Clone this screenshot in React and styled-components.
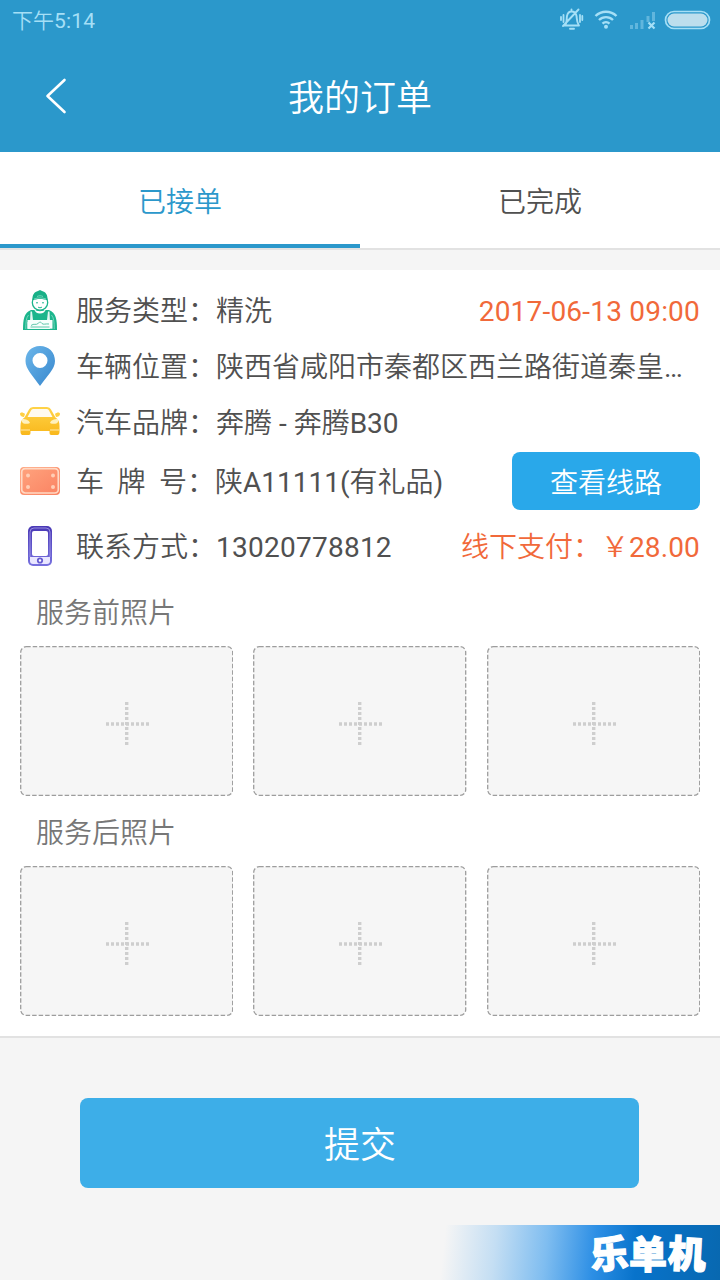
import React from 'react';
import styled, { createGlobalStyle } from 'styled-components';

const GlobalStyle = createGlobalStyle`
  * { box-sizing: border-box; }
  body {
    margin: 0;
    background: #f5f5f5;
    font-family: Roboto, "Noto Sans CJK SC", sans-serif;
    font-weight: 350;
    color: #505050;
  }
  button { font-family: inherit; font-weight: inherit; border: 0; padding: 0; }
`;

const Screen = styled.div`
  position: relative;
  display: flex;
  flex-direction: column;
  width: 720px;
  height: 1280px;
  overflow: hidden;
  background: #f5f5f5;
`;

const Header = styled.header`
  height: 152px;
  background: #2b98cb;
  color: #fff;
`;

const StatusBar = styled.div`
  display: flex;
  justify-content: space-between;
  align-items: center;
  height: 40px;
  padding: 0 8px 0 12px;
  font-size: 21px;
  color: #a5dff6;
`;

const Clock = styled.span`
  padding-bottom: 2px;
`;

const Latin = styled.span`
  font-weight: 400;
  letter-spacing: ${(p) => p.$spacing || 0}px;
`;

const TitleBar = styled.div`
  display: grid;
  grid-template-columns: 112px 1fr 112px;
  align-items: center;
  height: 112px;
`;

const BackButton = styled.button`
  display: flex;
  justify-content: center;
  background: none;
  color: #fff;
`;

const Title = styled.h1`
  margin: 0;
  padding-top: 5px;
  text-align: center;
  font-size: 36px;
  font-weight: inherit;
  line-height: 52px;
`;

const Tabs = styled.nav`
  display: flex;
  height: 98px;
  background: #fff;
  border-bottom: 2px solid #e2e2e2;
`;

const Tab = styled.button`
  flex: 1;
  height: 96px;
  padding-bottom: 1px;
  font-size: 28px;
  background: none;
  color: ${(p) => (p.$active ? '#2b98cb' : '#505050')};
  border-top: 4px solid transparent;
  border-bottom: 4px solid ${(p) => (p.$active ? '#2b98cb' : 'transparent')};
`;

const Card = styled.main`
  height: 768px;
  margin-top: 20px;
  padding: 12px 20px 0;
  background: #fff;
  border-bottom: 2px solid #e2e2e2;
`;

const Row = styled.div`
  display: flex;
  align-items: center;
  height: ${(p) => p.$height}px;
  font-size: 28px;
  line-height: 42px;
  white-space: nowrap;
`;

const RowIcon = styled.svg`
  flex: none;
  width: 40px;
  height: 40px;
  margin-right: 16px;
`;

const Label = styled.span`
  display: flex;
  justify-content: space-between;
  flex: none;
  width: ${(p) => p.$width || 140}px;
  padding-top: 4px;
`;

const Value = styled.span`
  flex: 1;
  padding-top: 4px;
`;

const Accent = styled.span`
  flex: none;
  padding-top: 4px;
  color: #f1693a;
`;

const RouteButton = styled.button`
  width: 188px;
  height: 58px;
  border-radius: 8px;
  background: #29a8ea;
  color: #fff;
  font-size: 28px;
`;

const SectionLabel = styled.h2`
  display: flex;
  align-items: center;
  height: ${(p) => p.$height}px;
  margin: 0;
  padding: 0 0 ${(p) => p.$lift || 0}px 16px;
  font-size: 28px;
  font-weight: inherit;
  color: #777;
`;

const PhotoGrid = styled.div`
  display: grid;
  grid-template-columns: repeat(3, 1fr);
  gap: 20px;
  height: 150px;
`;

const PhotoFrame = styled.svg`
  display: block;
  width: 100%;
  height: 150px;
`;

const SubmitButton = styled.button`
  width: 559px;
  height: 90px;
  margin: 60px 0 0 80px;
  padding: 0 0 2px 1px;
  border-radius: 8px;
  background: #3daee8;
  color: #fff;
  font-size: 36px;
`;

const Watermark = styled.div`
  position: absolute;
  right: 0;
  bottom: 0;
  display: flex;
  align-items: center;
  justify-content: flex-end;
  gap: 1px;
  width: 280px;
  height: 55px;
  padding: 0 14px 2px 0;
  background: linear-gradient(96deg, #f5f5f5 2%, #c4def3 20%, #7fbdf0 38%, #2d8fe5 55%, #0873cb 70%, #0868b0 100%);
  color: #fff;
  font-family: "Noto Sans CJK SC", sans-serif;
  font-size: 38px;
  font-weight: 900;
  -webkit-text-stroke: 1.2px #fff;
`;

const WatermarkGlyph = styled.span`
  display: inline-block;
  transform: rotate(${(p) => p.$tilt}deg);
`;

function StatusIcons() {
  return (
    <svg width="152" height="28" viewBox="560 6 152 28" fill="none" stroke="#a5dff6">
      <g strokeWidth="1.9" strokeLinecap="round">
        <path d="M564 25.500h15M566 23.500c1-2 .5-5 1-7.500.6-3 2-4.500 4.500-4.500s4.500 1.500 5 4.500.2 6 2 8.500M571.500 10.500v-1M563 26 578.500 9.500M570 28.800h4" />
        <path d="M563.500 15v7M561 17v3M580 15v7M582.300 16v4" strokeWidth="1.800" />
      </g>
      <path d="M595.500 16a15 15 0 0 1 21 0M599 20a10 10 0 0 1 14 0M602.500 23.700a5 5 0 0 1 7 0" strokeWidth="2.400" />
      <circle cx="606" cy="26.800" r="2" fill="#a5dff6" stroke="none" />
      <path d="M631.500 29v-4M636.500 29v-6M642 29v-9M648 22v-6M653.500 21v-9" stroke="#61b6dd" strokeWidth="3" />
      <path d="m648.500 22.500 6 6M654.500 22.500l-6 6" strokeWidth="2.200" />
      <rect x="665.500" y="11.500" width="44" height="17" rx="8.500" strokeWidth="1.700" />
      <rect x="667.500" y="13.500" width="40" height="13" rx="6.500" fill="#bcdeed" stroke="none" />
    </svg>
  );
}

function WorkerIcon() {
  return (
    <RowIcon viewBox="0 0 40 40">
      <path d="M3 40c0-11 1-17 8-20h18c7 3 8 9 8 20Z" fill="#1bb58c" />
      <path d="M10.500 21.500h1.500l1 8.500h14l1-8.500h1.500l.5 10.500v7H7.500v-7h2.500Z" fill="#e2f7f1" />
      <path d="M7.500 30h25v8.700h-25Z" fill="#f7fffc" />
      <path d="M5.800 39c0-6 .2-11 2.700-14" fill="none" stroke="#8fdcc7" strokeWidth=".8" />
      <path d="M34.200 39c0-6-.2-11-2.700-14" fill="none" stroke="#8fdcc7" strokeWidth=".8" />
      <path d="M11 35.500c3-2.500 5 0 7-2s3-1.500 4 0 4 0 7 .5M10.500 37h19" fill="none" stroke="#5cc7aa" strokeWidth="1" />
      <path d="M14 19c3 3 9 3 12 0-1 3-3 4.500-6 4.500s-5-1.500-6-4.500Z" fill="#fff" />
      <circle cx="20" cy="12.500" r="7.700" fill="#fff" stroke="#1bb58c" strokeWidth="1.300" />
      <path d="M12.500 10.500c-.5-6 2-8.500 5.500-9.500l2-1 2 1c3.500 1 6 3.500 5.500 9.500-4-2-11-2-15 0Z" fill="#18b087" />
      <path d="M17 6.500c2-1 4-1 6 0M14 9c4-1.500 8-1.500 12 0" fill="none" stroke="#8bdec8" strokeWidth=".8" />
      <path d="M16 12.800h2M22 12.800h2M18 17c1 1 3 1 4 0" stroke="#20b58d" fill="none" />
    </RowIcon>
  );
}

function PinIcon() {
  return (
    <RowIcon viewBox="0 0 40 40">
      <defs>
        <linearGradient id="pin" x1="0" y1="0" x2="1" y2="1">
          <stop stopColor="#6bb6ea" /><stop offset="1" stopColor="#3887cd" />
        </linearGradient>
      </defs>
      <path fillRule="evenodd" d="M20 0C11 0 5.500 6.500 5.500 15 5.500 23 13 30 20 40c7-10 15-17 15-25C35 6.500 29 0 20 0Zm0 7a7.500 7.500 0 1 1 0 15 7.500 7.500 0 0 1 0-15Z" fill="url(#pin)" />
    </RowIcon>
  );
}

function CarIcon() {
  return (
    <RowIcon viewBox="0 0 40 40">
      <defs>
        <linearGradient id="car" x1="0" y1="0" x2="0" y2="1">
          <stop stopColor="#ffd348" /><stop offset="1" stopColor="#f9b81c" />
        </linearGradient>
      </defs>
      <path d="M4.500 15.500 9 7.500Q10 5 13 5h14q3 0 4 2.500l4.500 8c3 2 4 4.500 4 8.500v6c0 2-1 3-2 3h-6c-2 0-2-1-2-4h-19c0 3 0 4-2 4h-6c-1 0-2-1-2-3v-6c0-4 1-6.500 4-8.500Z" fill="url(#car)" />
      <path d="M0 12c0-2 3-2 5 0l-1 3c-2 0-4-1-4-3ZM40 12c0-2-3-2-5 0l1 3c2 0 4-1 4-3Z" fill="#ffcf42" />
      <path d="m7.500 15 3.500-6.500Q11.500 7 13 7h14q1.500 0 2 1.500l3.500 6.500Z" fill="#fffaf0" />
      <path d="M2 17c4 0 7 1 8 4-3 1.500-7 1-8-1ZM38 17c-4 0-7 1-8 4 3 1.500 7 1 8-1Z" fill="#fff1bd" />
      <path d="M1 28h9M30 28h9" stroke="#ffe9ad" strokeWidth="1.200" />
    </RowIcon>
  );
}

function PlateIcon() {
  return (
    <RowIcon viewBox="0 0 40 40">
      <defs>
        <linearGradient id="plate" x1="0" y1="0" x2="1" y2="1">
          <stop stopColor="#ffa47e" /><stop offset="1" stopColor="#fa8262" />
        </linearGradient>
      </defs>
      <rect y="6" width="40" height="28" rx="4" fill="url(#plate)" />
      <rect x="1.700" y="7.700" width="36.600" height="24.300" rx="3.500" fill="none" stroke="#ffd9c4" strokeWidth="1.700" />
      <g fill="#ffceb5">
        <circle cx="8" cy="14.500" r="2" /><circle cx="33" cy="14.500" r="2" />
        <circle cx="8" cy="26" r="2" /><circle cx="33" cy="26" r="2" />
      </g>
    </RowIcon>
  );
}

function PhoneIcon() {
  return (
    <RowIcon viewBox="0 0 40 40">
      <defs>
        <linearGradient id="phone" x1="0" y1="0" x2="0" y2="1">
          <stop stopColor="#4938b5" /><stop offset="1" stopColor="#7771df" />
        </linearGradient>
      </defs>
      <rect x="8" y="0" width="24" height="40" rx="5" fill="url(#phone)" />
      <path d="M10 31V6q0-4 4-4h12q4 0 4 4v25" fill="none" stroke="#aaa1e8" strokeWidth=".8" />
      <rect x="12" y="5" width="16" height="25" rx="2" fill="#fff" />
      <path d="M10 31h20v4q0 3-3 3H13q-3 0-3-3Z" fill="#e9e6ff" />
      <circle cx="20" cy="34.500" r="2.200" fill="#fff" stroke="#655bd0" strokeWidth="1.800" />
    </RowIcon>
  );
}

function PhotoSlot() {
  return (
    <PhotoFrame viewBox="0 0 213.333 150" role="img">
      <rect x=".7" y=".7" width="212" height="148.600" rx="5.500" fill="#f6f6f6" stroke="#9d9d9d" strokeWidth="1.300" strokeDasharray="4.500 2" />
      <path d="M86 78h43M106.700 56v44" fill="none" stroke="#cecece" strokeWidth="3.400" strokeDasharray="3 2" />
    </PhotoFrame>
  );
}

function PhotoSection({ title, height, lift }) {
  return (
    <section>
      <SectionLabel $height={height} $lift={lift}>{title}</SectionLabel>
      <PhotoGrid><PhotoSlot /><PhotoSlot /><PhotoSlot /></PhotoGrid>
    </section>
  );
}

export default function App() {
  return (
    <Screen>
      <GlobalStyle />
      <Header>
        <StatusBar><Clock>下午<Latin $spacing={0.2}>5:14</Latin></Clock><StatusIcons /></StatusBar>
        <TitleBar>
          <BackButton>
            <svg width="24" height="40" viewBox="0 0 24 40" fill="none" stroke="currentColor" strokeWidth="2.600" strokeLinecap="round" strokeLinejoin="round">
              <path d="M20.500 4 3.500 20l17 16" />
            </svg>
          </BackButton>
          <Title>我的订单</Title>
        </TitleBar>
      </Header>
      <Tabs>
        <Tab $active>已接单</Tab>
        <Tab>已完成</Tab>
      </Tabs>
      <Card>
        <Row $height={56}>
          <WorkerIcon /><Label>服务类型：</Label><Value>精洗</Value>
          <Accent><Latin $spacing={0.2}>2017-06-13 09:00</Latin></Accent>
        </Row>
        <Row $height={56}>
          <PinIcon /><Label>车辆位置：</Label><Value>陕西省咸阳市秦都区西兰路街道秦皇<Latin>…</Latin></Value>
        </Row>
        <Row $height={56}>
          <CarIcon /><Label>汽车品牌：</Label><Value>奔腾<Latin> - </Latin>奔腾<Latin>B30</Latin></Value>
        </Row>
        <Row $height={62}>
          <PlateIcon /><Label $width={139}><span>车</span><span>牌</span><span>号：</span></Label>
          <Value>陕<Latin>A11111(</Latin>有礼品<Latin>)</Latin></Value>
          <RouteButton>查看线路</RouteButton>
        </Row>
        <Row $height={68}>
          <PhoneIcon /><Label>联系方式：</Label><Value><Latin $spacing={0.25}>13020778812</Latin></Value>
          <Accent>线下支付：￥<Latin $spacing={0.15}>28.00</Latin></Accent>
        </Row>
        <PhotoSection title="服务前照片" height={66} lift={4} />
        <PhotoSection title="服务后照片" height={70} />
      </Card>
      <SubmitButton>提交</SubmitButton>
      <Watermark>
        <WatermarkGlyph $tilt={-4}>乐</WatermarkGlyph>
        <WatermarkGlyph $tilt={0}>单</WatermarkGlyph>
        <WatermarkGlyph $tilt={3}>机</WatermarkGlyph>
      </Watermark>
    </Screen>
  );
}
